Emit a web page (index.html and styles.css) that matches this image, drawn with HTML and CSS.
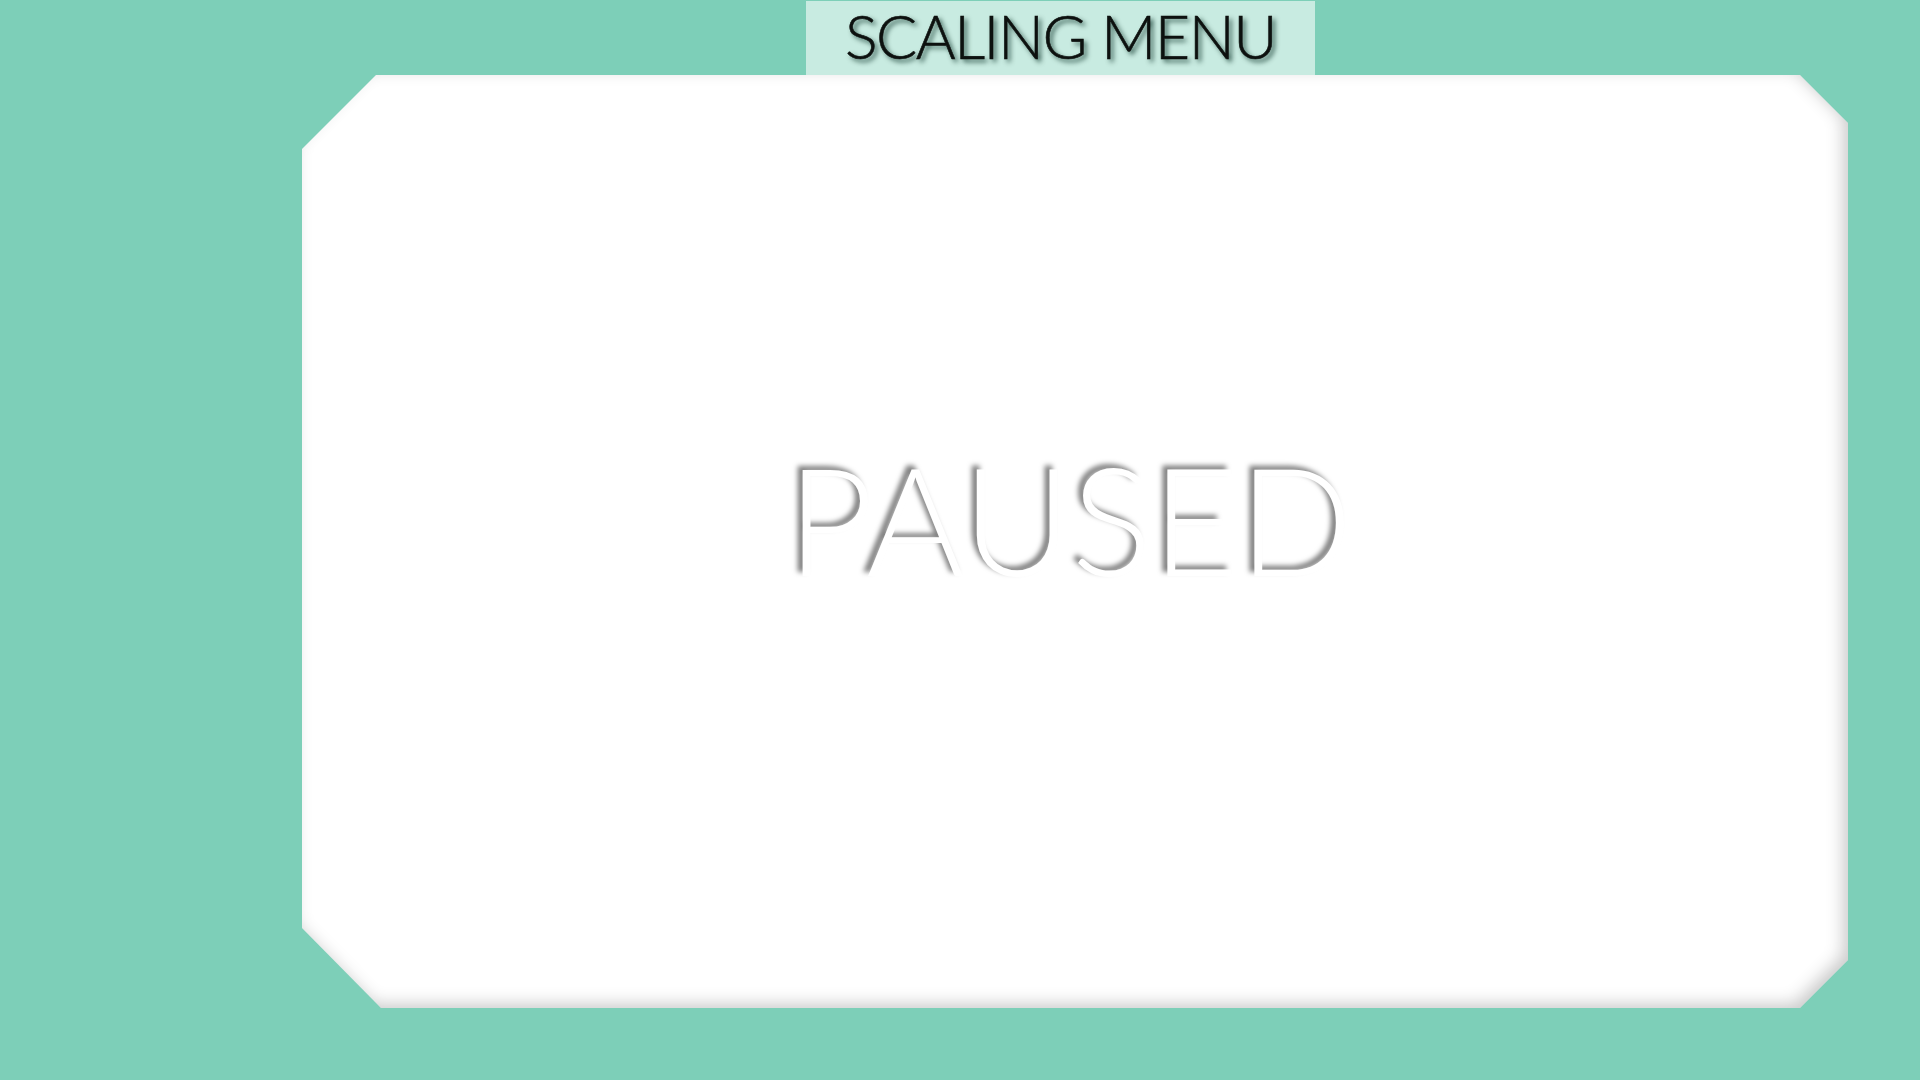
FILE: index.html
```html
<!DOCTYPE html>
<html lang="en">
<head>
<meta charset="utf-8">
<title>Scaling Menu</title>
<link rel="stylesheet" href="styles.css">
</head>
<body>
<div class="stage">
  <div class="header"><span class="header-title">SCALING MENU</span></div>
  <div class="panel">
    <svg class="panel-bg" viewBox="0 0 1546 933" preserveAspectRatio="none" aria-hidden="true">
      <defs>
        <filter id="inset" x="-5%" y="-5%" width="110%" height="110%">
          <feFlood flood-color="#000" flood-opacity="0.4" result="f"/>
          <feComposite in="f" in2="SourceAlpha" operator="out" result="outside"/>
          <feOffset in="outside" dx="-6" dy="-5" result="off"/>
          <feGaussianBlur in="off" stdDeviation="8" result="blur"/>
          <feComposite in="blur" in2="SourceAlpha" operator="in" result="inner"/>
          <feMerge><feMergeNode in="SourceGraphic"/><feMergeNode in="inner"/></feMerge>
        </filter>
      </defs>
      <polygon points="74,0 1498,0 1546,48 1546,885 1498,933 79,933 0,853 0,74" fill="#ffffff" filter="url(#inset)"/>
    </svg>
    <div class="paused">PAUSED</div>
  </div>
</div>
</body>
</html>
```
FILE: styles.css
```css
html, body {
  margin: 0;
  padding: 0;
}
body {
  background: #7dcfb8;
  width: 1920px;
  height: 1080px;
  overflow: hidden;
  font-family: "Lato", "Liberation Sans", sans-serif;
}
.stage {
  display: flex;
  flex-direction: column;
  margin-left: 302px;
  padding-top: 1px;
  width: 1546px;
}
.header {
  margin-left: 504px;
  width: 509px;
  height: 74px;
  background: #c8ebe1;
  display: flex;
  align-items: center;
  justify-content: center;
}
.header-title {
  font-size: 61px;
  font-weight: 300;
  color: #0d110f;
  line-height: 1;
  letter-spacing: -1.5px;
  -webkit-text-stroke: 0.6px #0d110f;
  text-shadow: 3px 3px 5px rgba(0, 40, 30, 0.8);
  padding-bottom: 6px;
}
.panel {
  position: relative;
  height: 933px;
  display: flex;
  align-items: flex-start;
  justify-content: flex-start;
}
.panel-bg {
  position: absolute;
  left: 0;
  top: 0;
  width: 100%;
  height: 100%;
}
.paused {
  position: relative;
  margin-left: 485px;
  margin-top: 368px;
  font-size: 150px;
  font-weight: 300;
  color: #ffffff;
  line-height: 1;
  letter-spacing: 0;
  text-shadow: -5px -4px 5px rgba(0, 0, 0, 0.5);
}
```
